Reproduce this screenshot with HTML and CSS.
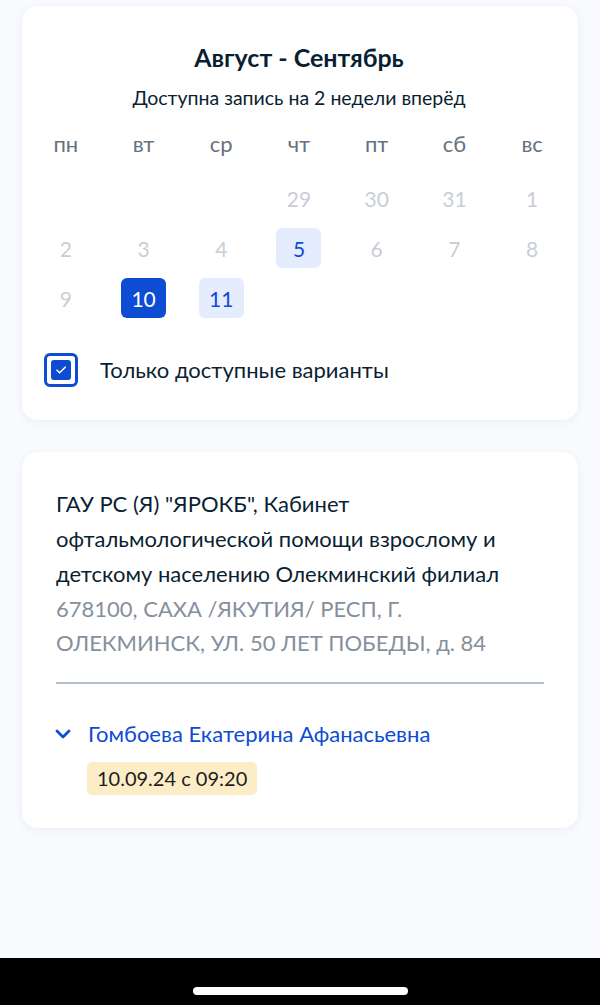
FILE: index.html
```html
<!DOCTYPE html>
<html lang="ru">
<head>
<meta charset="utf-8">
<title>Запись</title>
<link rel="stylesheet" href="styles.css">
</head>
<body>
<div class="screen">
  <main class="content">
    <section class="card calendar">
      <h1 class="cal-title">Август - Сентябрь</h1>
      <p class="cal-sub">Доступна запись на 2 недели вперёд</p>
      <div class="week">
        <span>пн</span><span>вт</span><span>ср</span><span>чт</span><span>пт</span><span>сб</span><span>вс</span>
      </div>
      <div class="days">
        <span class="day"></span><span class="day"></span><span class="day"></span>
        <span class="day off">29</span><span class="day off">30</span><span class="day off">31</span><span class="day off">1</span>
        <span class="day off">2</span><span class="day off">3</span><span class="day off">4</span>
        <span class="day avail">5</span><span class="day off">6</span><span class="day off">7</span><span class="day off">8</span>
        <span class="day off">9</span><span class="day selected">10</span><span class="day avail">11</span>
      </div>
      <label class="check-row">
        <span class="checkbox">
          <span class="checkbox-inner">
            <svg viewBox="0 0 20 20" width="20" height="20"><path d="M6 10.2l2.6 2.6L14.2 7.2" fill="none" stroke="#fff" stroke-width="1.6" stroke-linecap="round" stroke-linejoin="round"/></svg>
          </span>
        </span>
        <span class="check-label">Только доступные варианты</span>
      </label>
    </section>

    <section class="card place">
      <p class="place-name">ГАУ РС (Я) "ЯРОКБ", Кабинет офтальмологической помощи взрослому и детскому населению Олекминский филиал</p>
      <p class="place-addr">678100, САХА /ЯКУТИЯ/ РЕСП, Г. ОЛЕКМИНСК, УЛ. 50 ЛЕТ ПОБЕДЫ, д. 84</p>
      <div class="divider"></div>
      <div class="doctor">
        <svg class="chev" viewBox="0 0 16 12" width="16" height="12"><path d="M2 3l6 6 6-6" fill="none" stroke="#0d4cd3" stroke-width="2.8" stroke-linecap="round" stroke-linejoin="round"/></svg>
        <span class="doctor-name">Гомбоева Екатерина Афанасьевна</span>
      </div>
      <div class="slots">
        <span class="slot">10.09.24 с 09:20</span>
      </div>
    </section>
  </main>
  <div class="homebar"><span class="home-indicator"></span></div>
</div>
</body>
</html>
```

FILE: styles.css
```css
* { box-sizing: border-box; }

html, body {
  margin: 0;
  padding: 0;
}

body {
  font-family: Lato, "Noto Sans", "Liberation Sans", sans-serif;
  background: #f8fafd;
  color: #1a1d21;
}

.screen {
  display: flex;
  flex-direction: column;
  height: 1005px;
}

.content {
  flex: 1;
  padding: 6px 22px 0;
  display: flex;
  flex-direction: column;
  gap: 32px;
}

.card {
  background: #fff;
  border-radius: 16px;
  box-shadow: 0 2px 8px rgba(40, 80, 140, 0.07);
}

.calendar {
  padding: 36px 7px 33px 5px;
}

.cal-title {
  margin: 0;
  text-align: center;
  font-size: 25px;
  line-height: 30px;
  font-weight: 700;
  color: #0b1f33;
}

.cal-sub {
  margin: 14px 0 0;
  text-align: center;
  font-size: 19.5px;
  line-height: 24px;
  color: #0b1f33;
}

.week {
  margin-top: 22px;
  display: grid;
  grid-template-columns: repeat(7, 1fr);
  font-size: 22px;
  line-height: 24px;
  color: #66727f;
  text-align: center;
}

.days {
  margin-top: 22px;
  display: grid;
  grid-template-columns: repeat(7, 1fr);
  grid-auto-rows: 40px;
  row-gap: 10px;
  justify-items: center;
}

.day {
  width: 45px;
  height: 40px;
  border-radius: 6px;
  display: flex;
  align-items: center;
  justify-content: center;
  font-size: 21px;
}

.day.off { color: #c9ced5; }

.day.avail {
  background: #e4ecfd;
  color: #0d4cd3;
}

.day.selected {
  background: #0d4cd3;
  color: #fff;
}

.check-row {
  margin: 35px 0 0 17px;
  display: flex;
  align-items: center;
  gap: 22px;
}

.checkbox {
  width: 34px;
  height: 34px;
  border: 3px solid #0d4cd3;
  border-radius: 6px;
  display: flex;
  align-items: center;
  justify-content: center;
  background: #fff;
}

.checkbox-inner {
  width: 20px;
  height: 20px;
  border-radius: 3px;
  background: #0d4cd3;
  display: flex;
}

.check-label {
  font-size: 22px;
  line-height: 28px;
  color: #0b1f33;
}

.place {
  padding: 34px 34px 33px;
}

.place-name {
  margin: 0;
  font-size: 22px;
  line-height: 35px;
  color: #0b1f33;
}

.place-addr {
  margin: 1px 0 0;
  font-size: 22px;
  line-height: 34px;
  color: #86909c;
}

.divider {
  margin-top: 22px;
  height: 2px;
  background: #b3c0d0;
}

.doctor {
  margin-top: 36px;
  display: flex;
  align-items: center;
  gap: 17px;
  height: 28px;
}

.chev { flex: none; margin-left: -1px; }

.doctor-name {
  font-size: 22px;
  line-height: 28px;
  color: #0d4cd3;
}

.slots {
  margin-top: 14px;
  padding-left: 31px;
  display: flex;
}

.slot {
  background: #fdedc7;
  border-radius: 5px;
  padding: 4px 10px;
  font-size: 20px;
  line-height: 25px;
  color: #1a1d21;
}

.homebar {
  height: 47px;
  background: #000;
  display: flex;
  justify-content: center;
  padding-top: 29px;
}

.home-indicator {
  width: 215px;
  height: 8px;
  border-radius: 4px;
  background: #fff;
}
```
